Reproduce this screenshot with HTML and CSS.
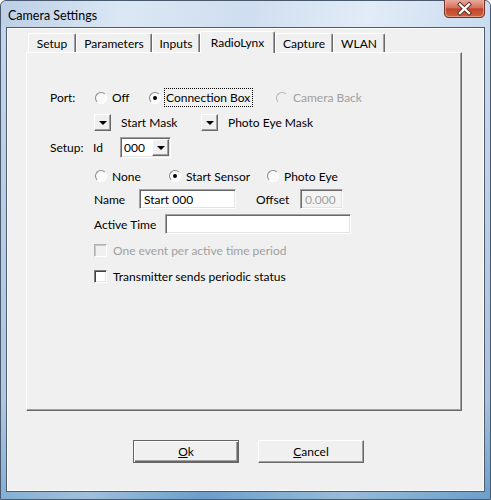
FILE: index.html
```html
<!DOCTYPE html>
<html lang="en">
<head>
    <meta charset="UTF-8">
    <title>Camera Settings</title>
    <link rel="stylesheet" href="styles.css">
</head>
<body>
    <div class="window">
        <div class="titlebar">
            <span class="title">Camera Settings</span>
            <div class="close-btn">
                <svg width="41" height="18" viewBox="0 0 41 18">
                    <defs>
                        <linearGradient id="closeGrad" x1="0" y1="0" x2="0" y2="1">
                            <stop offset="0" stop-color="#e9a99b"/>
                            <stop offset="0.45" stop-color="#d2705c"/>
                            <stop offset="0.5" stop-color="#c0452c"/>
                            <stop offset="1" stop-color="#d2623e"/>
                        </linearGradient>
                    </defs>
                    <path d="M0.5 0 V13 Q0.5 17.5 5 17.5 H36 Q40.5 17.5 40.5 13 V0" fill="url(#closeGrad)" stroke="#6e3428"/>
                    <path d="M1.5 0 V13 Q1.5 16.5 5 16.5 H36 Q39.5 16.5 39.5 13 V0" fill="none" stroke="#f1c0b4" stroke-opacity="0.6"/>
                    <path d="M16 4.5 L25 13 M25 4.5 L16 13" stroke="#5a2a22" stroke-width="4.2" stroke-linecap="square"/>
                    <path d="M16 4.5 L25 13 M25 4.5 L16 13" stroke="#fff" stroke-width="2.4" stroke-linecap="square"/>
                </svg>
            </div>
        </div>
        <div class="client">
            <div class="tabs">
                <div class="tab tab-setup">Setup</div>
                <div class="tab tab-params">Parameters</div>
                <div class="tab tab-inputs">Inputs</div>
                <div class="tab tab-radio active">RadioLynx</div>
                <div class="tab tab-capture">Capture</div>
                <div class="tab tab-wlan">WLAN</div>
            </div>
            <div class="panel">
                <div class="row row-port">
                    <span class="lbl">Port:</span>
                    <div class="ctl">
                        <label class="radio w-off"><span class="dot"></span>Off</label>
                        <label class="radio w-box"><span class="dot checked"></span><span class="focus">Connection Box</span></label>
                        <label class="radio disabled"><span class="dot"></span>Camera Back</label>
                    </div>
                </div>
                <div class="row row-mask">
                    <span class="lbl"></span>
                    <div class="ctl">
                        <div class="mask"><span class="drop"><i class="arrow"></i></span>Start Mask</div>
                        <div class="mask"><span class="drop"><i class="arrow"></i></span>Photo Eye Mask</div>
                    </div>
                </div>
                <div class="row row-setup">
                    <span class="lbl">Setup:</span>
                    <div class="ctl">
                        <span class="id-lbl">Id</span>
                        <div class="combo"><span class="combo-val">000</span><span class="drop"><i class="arrow"></i></span></div>
                    </div>
                </div>
                <div class="row row-sensor">
                    <span class="lbl"></span>
                    <div class="ctl">
                        <label class="radio w-none"><span class="dot"></span>None</label>
                        <label class="radio w-start"><span class="dot checked"></span>Start Sensor</label>
                        <label class="radio"><span class="dot"></span>Photo Eye</label>
                    </div>
                </div>
                <div class="row row-name">
                    <span class="lbl"></span>
                    <div class="ctl">
                        <span class="field-lbl w-name">Name</span>
                        <div class="edit edit-name">Start 000</div>
                        <span class="field-lbl w-offset">Offset</span>
                        <div class="edit edit-offset disabled">0.000</div>
                    </div>
                </div>
                <div class="row row-active">
                    <span class="lbl"></span>
                    <div class="ctl">
                        <span class="field-lbl w-active">Active Time</span>
                        <div class="edit edit-active"></div>
                    </div>
                </div>
                <div class="row row-check1">
                    <span class="lbl"></span>
                    <label class="check disabled"><span class="box"></span>One event per active time period</label>
                </div>
                <div class="row row-check2">
                    <span class="lbl"></span>
                    <label class="check"><span class="box"></span>Transmitter sends periodic status</label>
                </div>
            </div>
            <div class="buttons">
                <button class="btn default"><u>O</u>k</button>
                <button class="btn"><u>C</u>ancel</button>
            </div>
        </div>
    </div>
</body>
</html>
```

FILE: styles.css
```css
body {
    margin: 0;
    font-family: "Lato", "Liberation Sans", sans-serif;
    font-size: 12px;
    color: #000;
}
.window {
    width: 491px;
    height: 500px;
    box-sizing: border-box;
    padding: 0 5px 7px 5px;
    display: flex;
    flex-direction: column;
    border: 1px solid #4a5a6e;
    border-radius: 6px 6px 0 0;
    background:
        linear-gradient(100deg, rgba(255,255,255,0) 0%, rgba(255,255,255,0.35) 30%, rgba(255,255,255,0) 50%, rgba(255,255,255,0.3) 75%, rgba(255,255,255,0) 100%),
        linear-gradient(to bottom, #c6d7ec 0%, #b3c9e3 40%, #a3bedc 80%, #6a9ec9 100%);
}
.titlebar {
    height: 26px;
    display: flex;
    align-items: flex-start;
    justify-content: space-between;
    margin-left: -5px;
    margin-right: -5px;
    background: linear-gradient(100deg, #bccfe6 0%, #dbe7f4 25%, #cfdef0 50%, #e2ecf7 75%, #c9dbef 100%);
    border-radius: 6px 6px 0 0;
}
.title {
    margin: 7px 0 0 7px;
    font-size: 12.5px;
}
.close-btn {
    margin: -1px 5px 0 0;
    height: 18px;
}
.client {
    flex: 1;
    background: #f0f0f0;
    border: 1px solid #4b5b70;
    box-shadow: inset 1px 1px #fdfdfd, inset -1px -1px #fdfdfd;
    display: flex;
    flex-direction: column;
}
.tabs {
    display: flex;
    align-items: flex-end;
    margin: 3px 0 -1px 21px;
    height: 22px;
    position: relative;
    z-index: 1;
}
.tab {
    height: 19px;
    box-sizing: border-box;
    padding-top: 2px;
    text-align: center;
    background: #f0f0f0;
    border-top: 1px solid #fff;
    border-left: 1px solid #fff;
    border-right: 1px solid #696969;
    box-shadow: inset -1px 0 #a0a0a0;
    border-radius: 2px 2px 0 0;
    margin-bottom: 1px;
}
.tab.active {
    height: 22px;
    padding-top: 3px;
    margin-bottom: 0;
}
.tab-setup { width: 48px; }
.tab-params { width: 76px; }
.tab-inputs { width: 48px; }
.tab-radio { width: 75px; }
.tab-capture { width: 58px; }
.tab-wlan { width: 52px; }
.panel {
    margin: 0 22px 0 19px;
    height: 359px;
    box-sizing: border-box;
    border-top: 1px solid #fff;
    border-left: 1px solid #fff;
    border-right: 1px solid #696969;
    border-bottom: 1px solid #696969;
    box-shadow: inset -1px -1px #a0a0a0;
    padding: 36px 0 0 23px;
}
.row {
    display: flex;
    align-items: center;
    white-space: nowrap;
}
.lbl {
    width: 44px;
    flex: none;
}
.ctl {
    display: flex;
    align-items: center;
}
.row-port { height: 17px; }
.row-mask { height: 17px; margin-top: 8px; }
.row-setup { height: 21px; margin-top: 6px; }
.row-sensor { height: 16px; margin-top: 10px; }
.row-name { height: 20px; margin-top: 5px; }
.row-active { height: 20px; margin-top: 5px; }
.row-check1 { height: 13px; margin-top: 10px; }
.row-check2 { height: 13px; margin-top: 13px; }

.radio {
    display: flex;
    align-items: center;
    padding-left: 1px;
    flex: none;
}
.w-off { width: 53px; }
.w-box { width: 126px; }
.w-none { width: 73px; }
.w-start { width: 97px; }
.dot {
    width: 12px;
    height: 12px;
    box-sizing: border-box;
    border-radius: 50%;
    border: 1px solid;
    border-color: #8a8a8a #fff #fff #8a8a8a;
    background: #fafafa;
    margin-right: 5px;
    position: relative;
}
.dot.checked::after {
    content: "";
    position: absolute;
    left: 3px;
    top: 3px;
    width: 4px;
    height: 4px;
    border-radius: 50%;
    background: #000;
}
.radio.disabled {
    color: #a0a0a0;
}
.radio.disabled .dot {
    background: #f0f0f0;
    border-color: #b4b4b4 #f0f0f0 #f0f0f0 #b4b4b4;
}
.focus {
    outline: 1px dotted #000;
    outline-offset: 1px;
    padding: 0 1px 0 0;
}
.mask {
    width: 107px;
    flex: none;
    display: flex;
    align-items: center;
}
.drop {
    width: 17px;
    height: 17px;
    box-sizing: border-box;
    background: #f0f0f0;
    border: 1px solid;
    border-color: #fff #696969 #696969 #fff;
    box-shadow: inset -1px -1px #a0a0a0;
    display: flex;
    align-items: center;
    justify-content: center;
    margin-right: 10px;
    flex: none;
}
.arrow {
    width: 0;
    height: 0;
    border-left: 4px solid transparent;
    border-right: 4px solid transparent;
    border-top: 4px solid #000;
    margin-top: 1px;
}
.id-lbl {
    width: 27px;
    margin-left: -1px;
}
.combo {
    width: 51px;
    height: 21px;
    box-sizing: border-box;
    background: #fff;
    border: 1px solid;
    border-color: #a0a0a0 #fff #fff #a0a0a0;
    box-shadow: inset 1px 1px #696969, inset -1px -1px #e3e3e3;
    display: flex;
    align-items: center;
    justify-content: space-between;
    padding: 1px 1px 1px 3px;
}
.combo .drop {
    margin-right: 0;
}
.field-lbl {
    flex: none;
}
.w-name { width: 45px; }
.w-offset { width: 44px; margin-left: 20px; }
.w-active { width: 71px; }
.edit {
    height: 20px;
    box-sizing: border-box;
    background: #fff;
    border: 1px solid;
    border-color: #a0a0a0 #fff #fff #a0a0a0;
    box-shadow: inset 1px 1px #696969, inset -1px -1px #e3e3e3;
    padding: 2px 0 0 4px;
    line-height: 15px;
}
.edit-name { width: 97px; }
.edit-offset { width: 43px; }
.edit-active { width: 186px; }
.edit.disabled {
    background: #f4f4f4;
    color: #a0a0a0;
}
.check {
    display: flex;
    align-items: center;
}
.box {
    width: 13px;
    height: 13px;
    box-sizing: border-box;
    background: #fff;
    border: 1px solid;
    border-color: #808080 #fff #fff #808080;
    box-shadow: inset 1px 1px #404040, inset -1px -1px #e3e3e3;
    margin-right: 6px;
}
.check.disabled {
    color: #a0a0a0;
}
.check.disabled .box {
    background: #f0f0f0;
    border-color: #b0b0b0 #fff #fff #b0b0b0;
    box-shadow: inset 1px 1px #c8c8c8;
}
.buttons {
    display: flex;
    gap: 19px;
    margin: 29px 0 0 126px;
}
.btn {
    width: 106px;
    height: 23px;
    font-family: inherit;
    font-size: 12px;
    color: #000;
    background: #f0f0f0;
    border: 1px solid;
    border-color: #fff #696969 #696969 #fff;
    box-shadow: inset -1px -1px #a0a0a0;
    padding: 0;
}
.btn.default {
    border-color: #646464;
    box-shadow: inset 1px 1px #fff, inset -1px -1px #696969, inset -2px -2px #a0a0a0;
}
```
